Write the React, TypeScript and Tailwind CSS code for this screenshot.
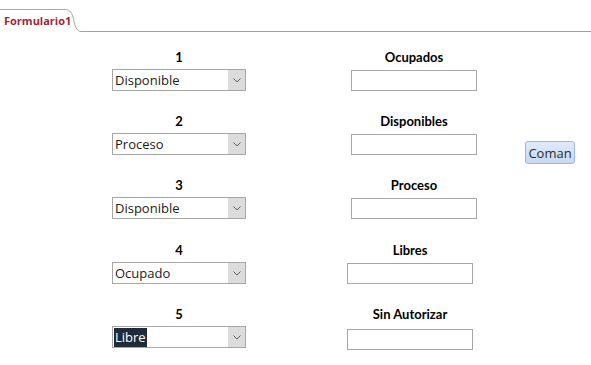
const rows = [
  { label: '1', value: 'Disponible', field: 'Ocupados', shift: false },
  { label: '2', value: 'Proceso', field: 'Disponibles', shift: false },
  { label: '3', value: 'Disponible', field: 'Proceso', shift: false },
  { label: '4', value: 'Ocupado', field: 'Libres', shift: true },
  { label: '5', value: 'Libre', field: 'Sin Autorizar', shift: true, selected: true },
];

function Combo({ value, selected }: { value: string; selected?: boolean }) {
  return (
    <div className="mt-[4px] flex h-[22px] w-[134px] border border-[#a6a6a6] bg-white">
      <div className="flex flex-1 items-center pl-[1px]">
        <span
          className={
            selected
              ? 'bg-[#1f2a3a] px-[1px] text-[13px] leading-[19px] text-white'
              : 'px-[1px] text-[13px] leading-[19px] text-[#1a1a1a]'
          }
          style={{ fontFamily: '"Open Sans", sans-serif' }}
        >
          {value}
        </span>
      </div>
      <div className="flex w-[17px] items-center justify-center bg-[#dcdcdc]">
        <svg width="8" height="5" viewBox="0 0 8 5">
          <path d="M0.5 0.5 L4 4 L7.5 0.5" stroke="#5f5f5f" strokeWidth="1" fill="none" />
        </svg>
      </div>
    </div>
  );
}

export default function App() {
  return (
    <div className="relative h-[365px] w-[591px] overflow-hidden bg-white">
      <div className="flex h-[32px]">
        <div
          className="mt-[9px] w-[64px] border-t border-[#aaa59e] pl-[4px] pt-[4px] text-[11px] font-bold leading-[14px] text-[#a3243b]"
          style={{ fontFamily: '"Open Sans", sans-serif' }}
        >
          Formulario1
        </div>
        <svg width="17" height="32" viewBox="0 0 17 32">
          <path d="M0 9.5 C5 9.5 7 11 9 17 C11 25 12 31.5 17 31.5" stroke="#aaa59e" fill="none" />
        </svg>
        <div className="flex-1 border-b border-[#a0a0a0]" />
      </div>

      <div className="flex flex-col pt-[17px]" style={{ fontFamily: 'Lato, sans-serif' }}>
        {rows.map((r, i) => (
          <div key={i} className={i === 0 ? 'flex items-start' : i === 3 ? 'mt-[23px] flex items-start' : 'mt-[22px] flex items-start'}>
            <div className="ml-[112px] flex w-[134px] flex-col items-center">
              <div className="h-[16px] text-[13px] font-bold leading-[16px] text-black">{r.label}</div>
              <Combo value={r.value} selected={r.selected} />
            </div>
            <div
              className={
                r.shift
                  ? 'ml-[101px] flex w-[126px] flex-col items-center'
                  : 'ml-[105px] flex w-[126px] flex-col items-center'
              }
            >
              <div className="h-[16px] text-[13px] font-bold leading-[16px] text-black">{r.field}</div>
              <div
                className={
                  i === 4
                    ? 'mt-[7px] h-[21px] w-[126px] border border-[#a6a6a6] bg-white'
                    : 'mt-[5px] h-[21px] w-[126px] border border-[#a6a6a6] bg-white'
                }
              />
            </div>
            {i === 1 && (
              <button
                className="-mb-[20px] ml-[48px] mt-[28px] h-[23px] w-[50px] rounded-[3px] border border-[#9db6de] bg-gradient-to-b from-[#e0eafb] to-[#c7d9f4] text-[13px] leading-[20px] text-[#2a2a2a]"
                style={{ fontFamily: '"Open Sans", sans-serif' }}
              >
                Coman
              </button>
            )}
          </div>
        ))}
      </div>
    </div>
  );
}
